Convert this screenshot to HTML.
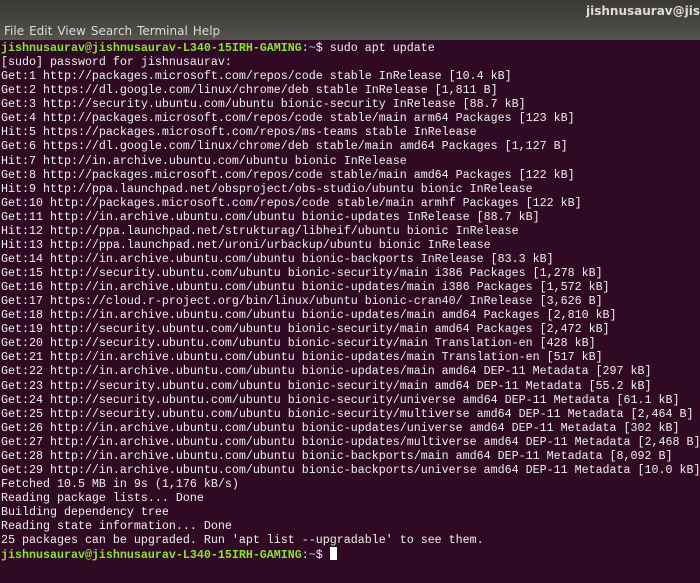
<!DOCTYPE html>
<html><head><meta charset="utf-8"><style>
html,body{margin:0;padding:0;width:700px;height:583px;overflow:hidden;background:#300a24}
.top{position:absolute;left:0;top:0;width:700px;height:40px;background:linear-gradient(#3a3935,#4d4c47 80%,#55544f)}
.title{position:absolute;left:586px;top:4px;width:114px;overflow:hidden;color:#dfdbd2;font:bold 12px "DejaVu Sans","Liberation Sans",sans-serif;white-space:nowrap}
.menu{position:absolute;left:4px;top:24px;color:#dfdbd2;font:12px "DejaVu Sans","Liberation Sans",sans-serif;white-space:nowrap}
.menu span{margin-right:5px}
pre{position:absolute;left:1px;top:41px;width:699px;overflow:hidden;margin:0;font:11.67px/14.06px "Liberation Mono",monospace;color:#eeeeec}
.g{color:#8ae234;font-weight:bold}.b{color:#729fcf;font-weight:bold}
.cur{display:inline-block;width:7px;height:13px;background:#fff;vertical-align:-2px}
</style></head><body>
<div class="top"></div>
<div class="title">jishnusaurav@jishnusaurav-L340</div>
<div class="menu"><span>File</span><span>Edit</span><span>View</span><span>Search</span><span>Terminal</span><span>Help</span></div>
<pre><span class="g">jishnusaurav@jishnusaurav-L340-15IRH-GAMING</span>:<span class="b">~</span>$ sudo apt update
[sudo] password for jishnusaurav: 
Get:1 http://packages.microsoft.com/repos/code stable InRelease [10.4 kB]
Get:2 https://dl.google.com/linux/chrome/deb stable InRelease [1,811 B]
Get:3 http://security.ubuntu.com/ubuntu bionic-security InRelease [88.7 kB]
Get:4 http://packages.microsoft.com/repos/code stable/main arm64 Packages [123 kB]
Hit:5 https://packages.microsoft.com/repos/ms-teams stable InRelease
Get:6 https://dl.google.com/linux/chrome/deb stable/main amd64 Packages [1,127 B]
Hit:7 http://in.archive.ubuntu.com/ubuntu bionic InRelease
Get:8 http://packages.microsoft.com/repos/code stable/main amd64 Packages [122 kB]
Hit:9 http://ppa.launchpad.net/obsproject/obs-studio/ubuntu bionic InRelease
Get:10 http://packages.microsoft.com/repos/code stable/main armhf Packages [122 kB]
Get:11 http://in.archive.ubuntu.com/ubuntu bionic-updates InRelease [88.7 kB]
Hit:12 http://ppa.launchpad.net/strukturag/libheif/ubuntu bionic InRelease
Hit:13 http://ppa.launchpad.net/uroni/urbackup/ubuntu bionic InRelease
Get:14 http://in.archive.ubuntu.com/ubuntu bionic-backports InRelease [83.3 kB]
Get:15 http://security.ubuntu.com/ubuntu bionic-security/main i386 Packages [1,278 kB]
Get:16 http://in.archive.ubuntu.com/ubuntu bionic-updates/main i386 Packages [1,572 kB]
Get:17 https://cloud.r-project.org/bin/linux/ubuntu bionic-cran40/ InRelease [3,626 B]
Get:18 http://in.archive.ubuntu.com/ubuntu bionic-updates/main amd64 Packages [2,810 kB]
Get:19 http://security.ubuntu.com/ubuntu bionic-security/main amd64 Packages [2,472 kB]
Get:20 http://security.ubuntu.com/ubuntu bionic-security/main Translation-en [428 kB]
Get:21 http://in.archive.ubuntu.com/ubuntu bionic-updates/main Translation-en [517 kB]
Get:22 http://in.archive.ubuntu.com/ubuntu bionic-updates/main amd64 DEP-11 Metadata [297 kB]
Get:23 http://security.ubuntu.com/ubuntu bionic-security/main amd64 DEP-11 Metadata [55.2 kB]
Get:24 http://security.ubuntu.com/ubuntu bionic-security/universe amd64 DEP-11 Metadata [61.1 kB]
Get:25 http://security.ubuntu.com/ubuntu bionic-security/multiverse amd64 DEP-11 Metadata [2,464 B]
Get:26 http://in.archive.ubuntu.com/ubuntu bionic-updates/universe amd64 DEP-11 Metadata [302 kB]
Get:27 http://in.archive.ubuntu.com/ubuntu bionic-updates/multiverse amd64 DEP-11 Metadata [2,468 B]
Get:28 http://in.archive.ubuntu.com/ubuntu bionic-backports/main amd64 DEP-11 Metadata [8,092 B]
Get:29 http://in.archive.ubuntu.com/ubuntu bionic-backports/universe amd64 DEP-11 Metadata [10.0 kB]
Fetched 10.5 MB in 9s (1,176 kB/s)
Reading package lists... Done
Building dependency tree       
Reading state information... Done
25 packages can be upgraded. Run 'apt list --upgradable' to see them.
<span class="g">jishnusaurav@jishnusaurav-L340-15IRH-GAMING</span>:<span class="b">~</span>$ <span class="cur"></span></pre>
</body></html>
